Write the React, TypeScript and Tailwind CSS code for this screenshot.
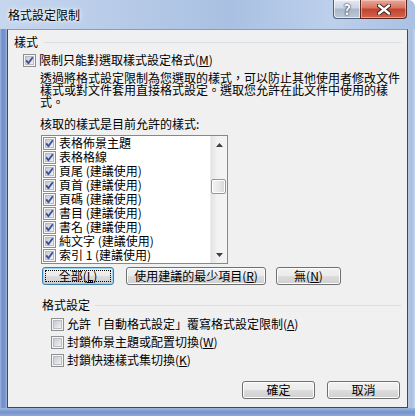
import React from "react";

const Box = ({ checked }: { checked?: boolean }) => (
  <svg width="13" height="13" viewBox="0 0 13 13" className="shrink-0">
    <defs>
      <linearGradient id="cbin" x1="0" y1="0" x2="1" y2="1">
        <stop offset="0" stopColor="#c4c8ce" />
        <stop offset="1" stopColor="#f3f3f4" />
      </linearGradient>
    </defs>
    <rect x="0.5" y="0.5" width="12" height="12" fill="#f5f5f5" stroke="#8e8f8f" />
    <rect x="2.5" y="2.5" width="8" height="8" fill="url(#cbin)" stroke="#b9bdc3" />
    {checked && (
      <path d="M3.2 6.4 L5.4 9.2 L9.8 3.2" fill="none" stroke="#3b5296" strokeWidth="1.9" strokeLinejoin="round" />
    )}
  </svg>
);

const Btn = ({ children, cls, def }: { children: React.ReactNode; cls: string; def?: boolean }) =>
  def ? (
    <div className={`${cls} h-[18px] rounded-[3px] border border-[#3c7fb1] bg-[linear-gradient(to_bottom,#f2f2f2_0%,#ebebeb_50%,#dddddd_50%,#cfcfcf_100%)] shadow-[inset_0_0_0_1px_#9ad4f2] p-[2px] flex`}>
      <div className="flex-1 border border-dotted border-black flex items-center justify-center leading-[12px]">{children}</div>
    </div>
  ) : (
    <div className={`${cls} h-[18px] rounded-[3px] border border-[#707070] bg-[linear-gradient(to_bottom,#f2f2f2_0%,#ebebeb_50%,#dddddd_50%,#cfcfcf_100%)] shadow-[inset_0_0_0_1px_#fcfcfc] flex items-center justify-center leading-[12px]`}>
      {children}
    </div>
  );

const items = [
  "表格佈景主題",
  "表格格線",
  "頁尾 (建議使用)",
  "頁首 (建議使用)",
  "頁碼 (建議使用)",
  "書目 (建議使用)",
  "書名 (建議使用)",
  "純文字 (建議使用)",
  "索引 1 (建議使用)",
];

export default function App() {
  return (
    <div className="w-[415px] h-[416px] flex flex-col overflow-hidden rounded-tr-[7px] bg-[linear-gradient(to_bottom,#c3d5ee,#aec4e4_60%,#a3bbe0)] font-['Noto_Sans_CJK_TC',sans-serif] text-[12px] text-black">
      {/* title bar */}
      <div className="h-[29px] shrink-0 flex items-start bg-[linear-gradient(to_right,#c5d6ee,#b7cbe8_30%,#a9c0e2_55%,#bcd0ec_80%,#aac1e3)]">
        <div className="pl-[8px] pt-[8px] leading-[14px] text-[12px] [text-shadow:0_0_6px_#fff,0_0_3px_#fff]">格式設定限制</div>
        <div className="ml-auto mr-[8px] flex">
          <div className="w-[27px] h-[19px] rounded-bl-[4px] border border-t-0 border-r-0 border-[#52617b] bg-[linear-gradient(to_bottom,#e3e9f2,#cbd4e2_45%,#aab6c9_50%,#bcc7d8)] flex items-center justify-center shadow-[inset_0_0_0_1px_rgba(255,255,255,0.6)]">
            <span className="text-[14px] font-bold text-white leading-none [text-shadow:0_0_1px_#1b2a44,0_0_2px_#1b2a44]">?</span>
          </div>
          <div className="w-[47px] h-[19px] rounded-br-[4px] border border-t-0 border-[#5a2620] bg-[linear-gradient(to_bottom,#e9a899,#d7735f_45%,#c2422d_50%,#d26450)] flex items-center justify-center shadow-[inset_0_0_0_1px_rgba(255,220,210,0.5)]">
            <svg width="14" height="11" viewBox="0 0 14 11">
              <path d="M2 1.5 L12 9.5 M12 1.5 L2 9.5" stroke="#3a1a14" strokeWidth="4.2" strokeLinecap="round" />
              <path d="M2 1.5 L12 9.5 M12 1.5 L2 9.5" stroke="#ffffff" strokeWidth="2.4" strokeLinecap="round" />
            </svg>
          </div>
        </div>
      </div>

      {/* middle */}
      <div className="flex flex-1 min-h-0">
        <div className="w-[7px] shrink-0 bg-[linear-gradient(to_right,#9ab2de,#6f8fcb_35%,#7a97cf_75%,#a8b9d6)]" />
        <div className="w-[401px] shrink-0 border border-[#3a4966] border-t-[#8e9ab0] bg-[#f0f0f0] flex flex-col">
          {/* heading 樣式 */}
          <div className="mt-[5px] ml-[6px] mr-[6px] h-[14px] flex items-center">
            <span className="leading-[14px]">樣式</span>
            <div className="flex-1 h-px ml-[6px] bg-[#d5dfe5]" />
          </div>
          <div className="mt-[4px] ml-[15px] h-[14px] flex items-center gap-[3px]">
            <Box checked />
            <span className="leading-[14px] whitespace-nowrap">限制只能對選取樣式設定格式(<u>M</u>)</span>
          </div>
          <div className="mt-[5px] ml-[32px] leading-[12px] whitespace-nowrap">
            <div>透過將格式設定限制為您選取的樣式，可以防止其他使用者修改文件</div>
            <div>樣式或對文件套用直接格式設定。選取您允許在此文件中使用的樣</div>
            <div>式。</div>
          </div>
          <div className="mt-[10px] ml-[32px] leading-[12px] whitespace-nowrap">核取的樣式是目前允許的樣式:</div>
          {/* list */}
          <div className="mt-[5px] ml-[33px] w-[187px] h-[129px] border border-[#828790] bg-white flex overflow-hidden">
            <div className="flex-1 pl-[1px] flex flex-col">
              {items.map((t) => (
                <div key={t} className="h-[14px] shrink-0 flex items-center gap-[3px]">
                  <Box checked />
                  <span className="leading-[14px] whitespace-nowrap">{t}</span>
                </div>
              ))}
            </div>
            <div className="w-[17px] shrink-0 flex flex-col bg-[linear-gradient(to_right,#e3e3e5,#f2f2f3_40%,#f4f4f5)] border-l border-[#ececec]">
              <div className="h-[17px] flex items-center justify-center">
                <svg width="7" height="4" viewBox="0 0 7 4"><path d="M0 4 L3.5 0 L7 4 Z" fill="#404040" /></svg>
              </div>
              <div className="flex-1 flex flex-col">
                <div className="mt-[26px] h-[15px] mr-[1px] rounded-[2px] border border-[#979797] bg-[linear-gradient(to_right,#f3f3f3,#e8e8e8_50%,#d6d6d6)] shadow-[inset_0_0_0_1px_#fdfdfd]" />
              </div>
              <div className="h-[17px] flex items-center justify-center">
                <svg width="7" height="4" viewBox="0 0 7 4"><path d="M0 0 L3.5 4 L7 0 Z" fill="#404040" /></svg>
              </div>
            </div>
          </div>
          {/* buttons row */}
          <div className="mt-[3px] ml-[34px] flex">
            <Btn cls="w-[72px]" def>全部(<u>L</u>)</Btn>
            <Btn cls="ml-[12px] w-[140px]">使用建議的最少項目(<u>R</u>)</Btn>
            <Btn cls="ml-[10px] w-[65px]">無(<u>N</u>)</Btn>
          </div>
          {/* heading 格式設定 */}
          <div className="mt-[13px] ml-[34px] mr-[6px] h-[14px] flex items-center">
            <span className="leading-[14px]">格式設定</span>
            <div className="flex-1 h-px ml-[5px] bg-[#d5dfe5]" />
          </div>
          <div className="mt-[5px] ml-[43px] flex flex-col gap-[4px]">
            <div className="h-[14px] flex items-center gap-[3px]">
              <Box />
              <span className="leading-[14px] whitespace-nowrap">允許「自動格式設定」覆寫格式設定限制(<u>A</u>)</span>
            </div>
            <div className="h-[14px] flex items-center gap-[3px]">
              <Box />
              <span className="leading-[14px] whitespace-nowrap">封鎖佈景主題或配置切換(<u>W</u>)</span>
            </div>
            <div className="h-[14px] flex items-center gap-[3px]">
              <Box />
              <span className="leading-[14px] whitespace-nowrap">封鎖快速樣式集切換(<u>K</u>)</span>
            </div>
          </div>
          <div className="mt-auto mb-[8px] mr-[7px] flex justify-end gap-[12px]">
            <Btn cls="w-[73px]">確定</Btn>
            <Btn cls="w-[73px]">取消</Btn>
          </div>
        </div>
        <div className="w-[7px] shrink-0 bg-[linear-gradient(to_right,#b7c8e3,#a9bfe1_50%,#c3d2ea)]" />
      </div>
      <div className="h-[8px] shrink-0 bg-[linear-gradient(to_bottom,#9fb6e0,#7594cd_50%,#8ea8d8)]" />
    </div>
  );
}
